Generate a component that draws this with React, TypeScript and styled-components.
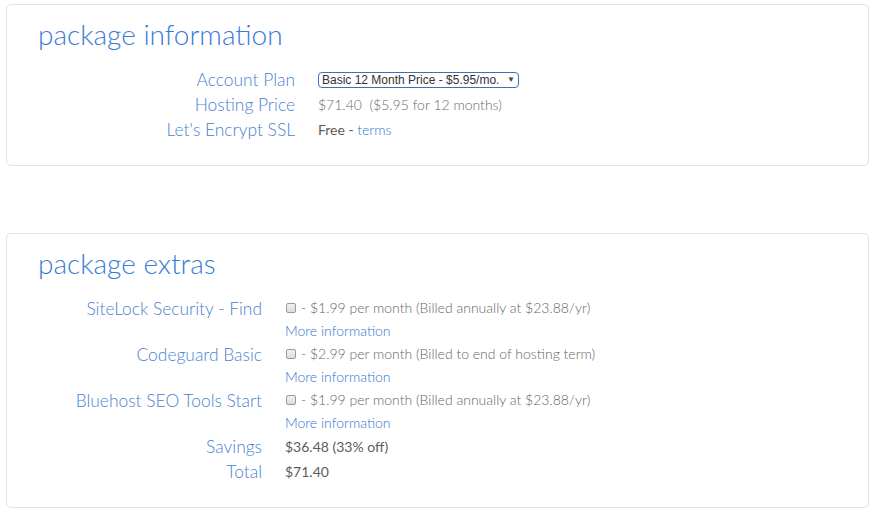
import React from "react";
import styled, { createGlobalStyle } from "styled-components";

const Global = createGlobalStyle`
  html, body { margin: 0; padding: 0; background: #ffffff; }
  body { font-family: Lato, "Open Sans", sans-serif; }
`;

const Page = styled.div`
  display: flex;
  flex-direction: column;
  gap: 67px;
  padding: 4px 10px 10px 6px;
`;

const Panel = styled.section`
  border: 1px solid #d5e5f4;
  border-radius: 5px;
  background: #fff;
  padding: 0 0 23px 0;
`;

const Title = styled.h2`
  margin: 0;
  padding: 11px 0 0 31px;
  font-family: Lato, sans-serif;
  font-weight: 300;
  font-size: 28px;
  line-height: 36px;
  color: #3a7bd5;
`;

const Rows = styled.div<{ $label: number }>`
  display: grid;
  grid-template-columns: ${(p) => p.$label}px 1fr;
  column-gap: 23px;
  margin-top: 15px;
`;

const Label = styled.div`
  text-align: right;
  font-weight: 300;
  font-size: 17.4px;
  line-height: 25px;
  color: #4a82d0;
  white-space: nowrap;
`;

const Value = styled.div<{ $dark?: boolean }>`
  font-size: 14px;
  font-weight: ${(p) => (p.$dark ? 400 : 300)};
  line-height: 25px;
  color: ${(p) => (p.$dark ? "#5c5c5c" : "#6a6a6a")};
  white-space: nowrap;
  display: flex;
  align-items: center;
`;

const Stack = styled.div`
  display: flex;
  flex-direction: column;
`;

const AddonLine = styled.div`
  font-size: 14px;
  font-weight: 300;
  line-height: 24px;
  color: #666;
  display: flex;
  align-items: center;
  white-space: nowrap;
`;

const MoreLink = styled.a`
  font-size: 14px;
  font-weight: 300;
  line-height: 22px;
  color: #2f74d4;
  text-decoration: none;
`;

const Link = styled.a`
  color: #2f74d4;
  font-weight: 300;
  text-decoration: none;
`;

const Box = styled.input`
  appearance: none;
  margin: 0 5px 0 1px;
  width: 10px;
  height: 10px;
  border: 1px solid #9a9a9a;
  border-radius: 2px;
  background: linear-gradient(#f2f2f2, #dcdcdc);
  box-sizing: border-box;
`;

const Select = styled.div`
  display: inline-flex;
  align-items: center;
  justify-content: space-between;
  width: 193px;
  height: 14px;
  border: 1px solid #3d6fba;
  border-radius: 4px;
  padding: 0 3px 0 3px;
  font-family: "Liberation Sans", Arial, sans-serif;
  font-size: 12px;
  color: #333;
  background: #fff;
  line-height: 14px;
`;

const Arrow = styled.span`
  font-size: 8px;
  color: #444;
  margin-left: 4px;
`;

const addons = [
  { name: "SiteLock Security - Find", text: "- $1.99 per month (Billed annually at $23.88/yr)" },
  { name: "Codeguard Basic", text: "- $2.99 per month (Billed to end of hosting term)" },
  { name: "Bluehost SEO Tools Start", text: "- $1.99 per month (Billed annually at $23.88/yr)" },
];

export default function App() {
  return (
    <>
      <Global />
      <Page>
        <Panel>
          <Title>package information</Title>
          <Rows $label={288}>
            <Label>Account Plan</Label>
            <Value>
              <Select>
                <span>Basic 12 Month Price - $5.95/mo.</span>
                <Arrow>▼</Arrow>
              </Select>
            </Value>
            <Label>Hosting Price</Label>
            <Value>$71.40&nbsp; ($5.95 for 12 months)</Value>
            <Label>Let's Encrypt SSL</Label>
            <Value $dark>
              Free -&nbsp;<Link href="#">terms</Link>
            </Value>
          </Rows>
        </Panel>
        <Panel>
          <Title>package extras</Title>
          <Rows $label={255}>
            {addons.map((a) => (
              <React.Fragment key={a.name}>
                <Label>{a.name}</Label>
                <Stack>
                  <AddonLine>
                    <Box type="checkbox" />
                    {a.text}
                  </AddonLine>
                  <MoreLink href="#">More information</MoreLink>
                </Stack>
              </React.Fragment>
            ))}
            <Label>Savings</Label>
            <Value $dark>$36.48 (33% off)</Value>
            <Label>Total</Label>
            <Value $dark>$71.40</Value>
          </Rows>
        </Panel>
      </Page>
    </>
  );
}
